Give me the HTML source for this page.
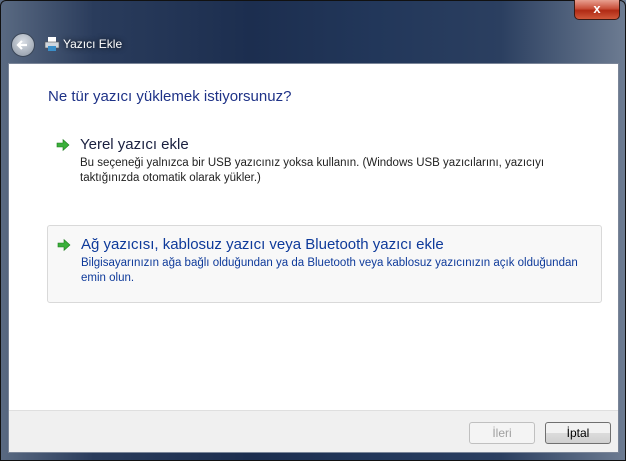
<!DOCTYPE html>
<html><head><meta charset="utf-8"><style>
*{margin:0;padding:0;box-sizing:border-box}
body{width:626px;height:461px;overflow:hidden;font-family:"Liberation Sans",sans-serif;
background:linear-gradient(90deg,#5a6a82 0%,#2a3c5c 15%,#1c2e4f 40%,#22375a 60%,#2b3f60 80%,#6d7c92 100%);position:relative}
.frame{position:absolute;left:0;top:0;width:626px;height:461px;border:1px solid #111;border-radius:6px 6px 0 0}
.close{position:absolute;left:574px;top:0;width:46px;height:20px;border:1px solid #3a1a14;border-top:none;border-radius:0 0 5px 5px;
background:linear-gradient(#e8a090,#c9503a 45%,#b02a14 55%,#d0583a);color:#fff;font-weight:bold;font-size:13px;text-align:center;line-height:18px}
.back{position:absolute;left:11px;top:33px;width:24px;height:24px;border-radius:50%;border:1px solid #3a4658;
background:radial-gradient(circle at 50% 35%,#d8dde4,#8c96a4)}
.title{position:absolute;left:63px;top:37px;color:#fff;font-size:12px;text-shadow:0 0 6px #000}
.content{position:absolute;left:8px;top:63px;width:611px;height:390px;background:#fff;border:1px solid #7a8598}
.foot{position:absolute;left:0;bottom:0;width:100%;height:42px;background:#f0f0f0;border-top:1px solid #dfdfdf}
h1{position:absolute;left:39px;top:24px;font-weight:normal;font-size:15px;color:#1e3287}
.opt{position:absolute;left:38px;width:555px;height:78px}
.opt2{border:1px solid #d9d9d9;border-radius:3px;background:#f8f8f8}
.arrow{position:absolute;left:9px;top:12px;width:14px;height:14px}
.ot{position:absolute;left:33px;top:10px;font-size:15px}
.od{position:absolute;left:33px;top:30px;font-size:11.5px;line-height:15px;width:520px}
.btn{position:absolute;top:358px;width:66px;height:22px;border:1px solid #707070;border-radius:3px;font-size:12px;text-align:center;line-height:20px;
background:linear-gradient(#f2f2f2 50%,#dcdcdc 50%,#d0d0d0)}
</style></head><body>
<div class="frame"></div>
<div class="close">x</div>
<div class="back"><svg width="22" height="22" viewBox="0 0 22 22"><path d="M15 11H7M10 7l-4 4 4 4" stroke="#fff" stroke-width="2.2" fill="none"/></svg></div>
<svg style="position:absolute;left:44px;top:36px" width="16" height="16" viewBox="0 0 16 16"><rect x="4" y="1" width="8" height="5" fill="#fff"/><rect x="1" y="6" width="14" height="6" fill="#cfd6de" stroke="#555" stroke-width=".6"/><rect x="4" y="10" width="8" height="5" fill="#3a8ec8"/></svg>
<div class="title">Yazıcı Ekle</div>
<div class="content">
<h1>Ne tür yazıcı yüklemek istiyorsunuz?</h1>
<div class="opt" style="top:62px">
<svg class="arrow" viewBox="0 0 14 14"><path d="M1 5h6V1.5L13 7l-6 5.5V9H1z" fill="#3bb03b" stroke="#1c7a1c" stroke-width=".6"/></svg>
<div class="ot" style="color:#1a2040">Yerel yazıcı ekle</div>
<div class="od" style="color:#222">Bu seçeneği yalnızca bir USB yazıcınız yoksa kullanın. (Windows USB yazıcılarını, yazıcıyı taktığınızda otomatik olarak yükler.)</div>
</div>
<div class="opt opt2" style="top:161px">
<svg class="arrow" viewBox="0 0 14 14"><path d="M1 5h6V1.5L13 7l-6 5.5V9H1z" fill="#3bb03b" stroke="#1c7a1c" stroke-width=".6"/></svg>
<div class="ot" style="color:#0e3a9a">Ağ yazıcısı, kablosuz yazıcı veya Bluetooth yazıcı ekle</div>
<div class="od" style="color:#0e3a9a">Bilgisayarınızın ağa bağlı olduğundan ya da Bluetooth veya kablosuz yazıcınızın açık olduğundan emin olun.</div>
</div>
<div class="foot"></div>
<div class="btn" style="left:460px;color:#a0a0a0;border-color:#c0c0c0;background:#f4f4f4">İleri</div>
<div class="btn" style="left:536px;color:#000">İptal</div>
</div>
</body></html>
